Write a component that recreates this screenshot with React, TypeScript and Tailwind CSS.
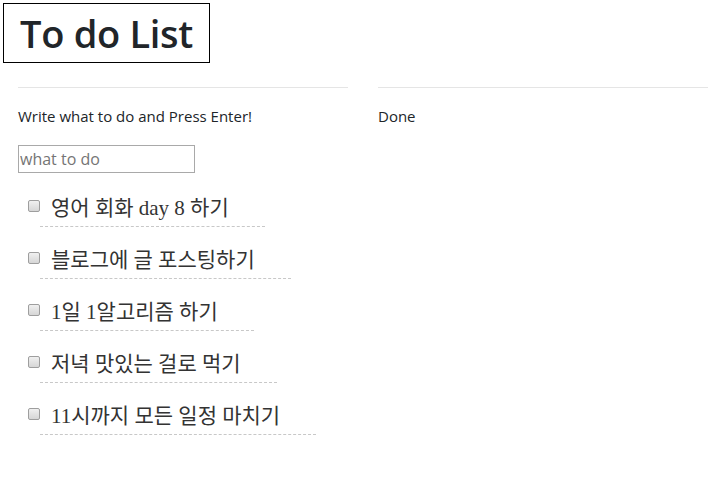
const todos = [
  '영어 회화 day 8 하기',
  '블로그에 글 포스팅하기',
  '1일 1알고리즘 하기',
  '저녁 맛있는 걸로 먹기',
  '11시까지 모든 일정 마치기',
];

const App = () => {
  return (
    <div className="min-h-[477px] bg-white text-[#212529] font-['Open_Sans','Noto_Sans_CJK_KR',sans-serif]">
      <h1 className="inline-block m-[3px] border border-black pl-[16px] pr-[16px] h-[60px] leading-[58px] text-[38px] font-semibold tracking-[-0.3px]">
        To do List
      </h1>

      <div className="flex gap-[30px] px-[18px] mt-[21px]">
        <div className="w-[330px]">
          <hr className="border-t border-[#e5e5e5]" />
          <p className="mt-[18px] text-[15px] leading-[20px]">Write what to do and Press Enter!</p>
          <input
            placeholder="what to do"
            className="mt-[19px] w-[177px] h-[28px] border border-[#a9a9a9] px-[1px] text-[16px] placeholder:text-[#757575] outline-none"
          />
          <ul className="mt-[20px]">
            {todos.map((t) => (
              <li key={t} className="flex items-start h-[52px]">
                <input
                  type="checkbox"
                  className="appearance-none ml-[10px] mt-[7px] w-[12px] h-[12px] rounded-[2px] border border-[#9e9e9e] bg-[linear-gradient(#f0f0f0,#d6d6d6)]"
                />
                <span className="pl-[11px] pr-[36px] pt-[1px] pb-[3px] border-b border-dashed border-[#c8c8c8] text-[21px] leading-[29px] font-['Liberation_Serif','Noto_Sans_CJK_KR',serif] text-[#333]">
                  {t}
                </span>
              </li>
            ))}
          </ul>
        </div>
        <div className="w-[330px]">
          <hr className="border-t border-[#e5e5e5]" />
          <p className="mt-[18px] text-[15px] leading-[20px]">Done</p>
        </div>
      </div>
    </div>
  );
};

export default App;
